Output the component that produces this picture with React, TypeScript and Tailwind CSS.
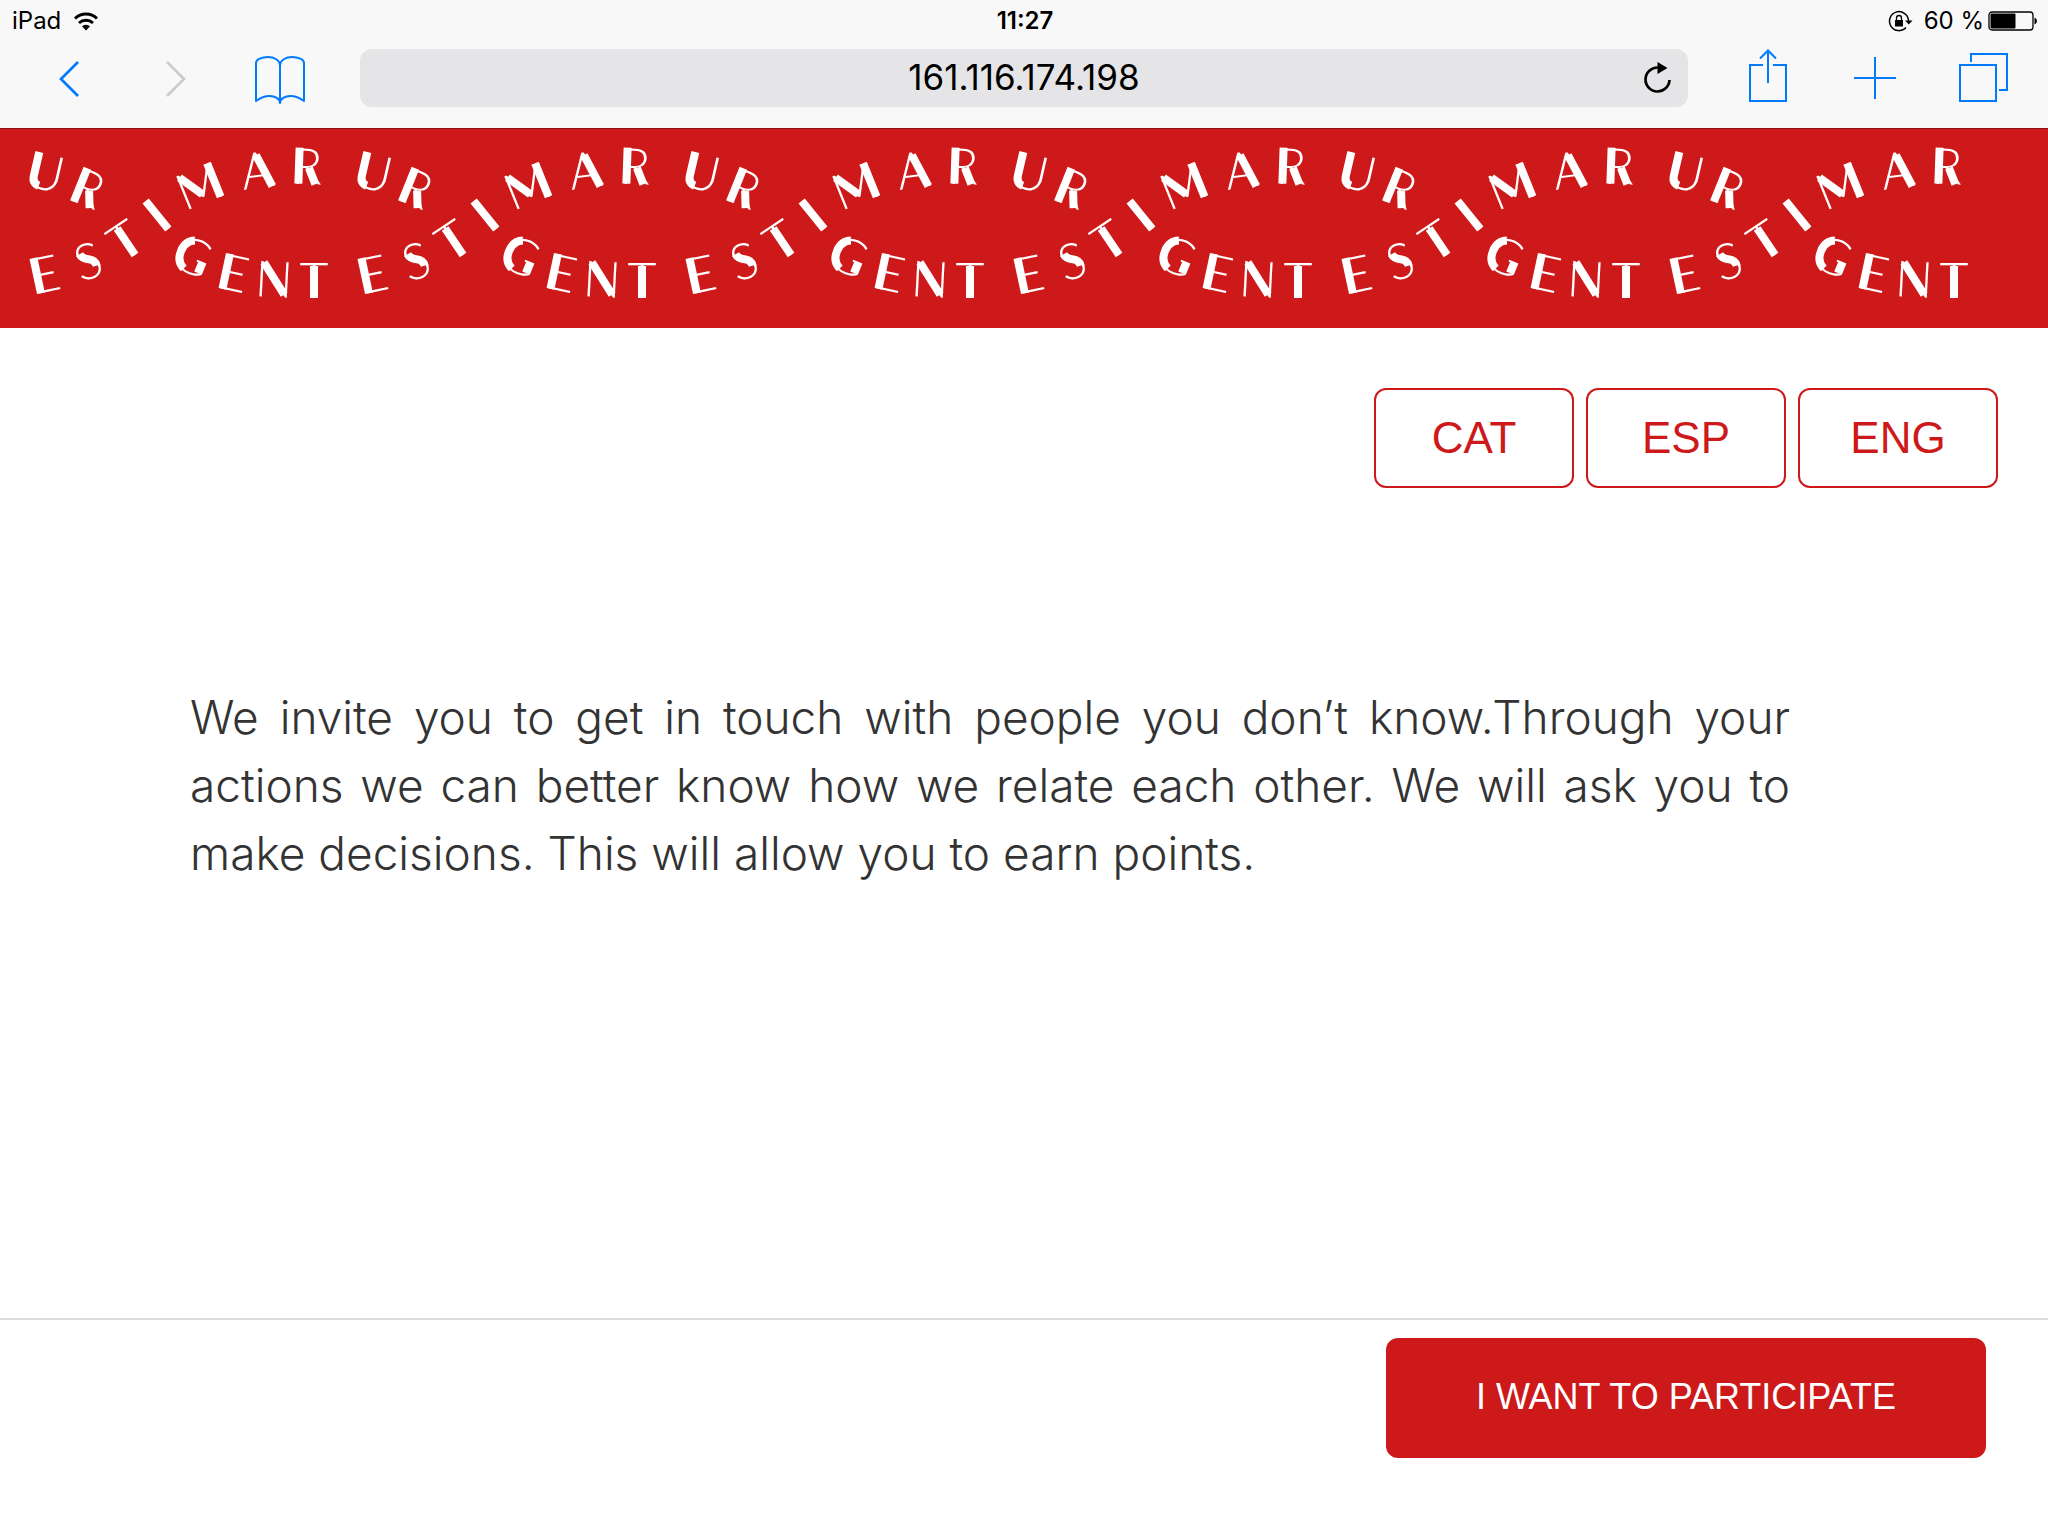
type Letter = { ch: string; x: number; y: number; r: number };

const LETTERS: Letter[] = [
  { ch: "U", x: 16, y: 24, r: 13 },
  { ch: "R", x: 58, y: 40, r: 22 },
  { ch: "E", x: 15, y: 126, r: -12 },
  { ch: "S", x: 58, y: 113, r: -17 },
  { ch: "T", x: 95, y: 92, r: -34 },
  { ch: "I", x: 127, y: 67, r: -39 },
  { ch: "M", x: 169, y: 38, r: -22 },
  { ch: "A", x: 227, y: 22, r: -8 },
  { ch: "R", x: 277, y: 18, r: 2 },
  { ch: "G", x: 163, y: 108, r: 22 },
  { ch: "E", x: 204, y: 125, r: 12 },
  { ch: "N", x: 244, y: 131, r: 3 },
  { ch: "T", x: 284, y: 132, r: 0 },
];

// Heavy strokes that give each letter its thick-and-thin contrast.
const ACCENTS: Record<string, string> = {
  U: "M-11 -18V6Q-11 14 -4 15",
  R: "M-8 -18V18M2 2L9 18",
  E: "M-8 -18V18",
  S: "M-6 -9Q-5 -4 1 -1.500Q7 1 7 7",
  T: "M0 -14V18",
  I: "M0 -18V18",
  M: "M-15 -15L0 9M16 -18V18",
  A: "M1 -15L13 18",
  G: "M-4 -15Q-13 -11 -13 0Q-13 11 -4 15M11 3V14",
  N: "M-11 -16L11 15",
};

function WaveTile() {
  return (
    <svg viewBox="0 0 328 150" className="h-[150px] w-[328px] shrink-0 overflow-visible" aria-label="Urgent Estimar">
      {LETTERS.map((l, i) => (
        <g key={i} transform={`translate(${l.x} ${l.y}) rotate(${l.r})`}>
          <text y="18" textAnchor="middle" className="fill-white font-['Lato'] text-[50px] font-light">
            {l.ch}
          </text>
          <path d={ACCENTS[l.ch]} fill="none" stroke="#fff" strokeWidth="8" />
        </g>
      ))}
    </svg>
  );
}

function StatusBar() {
  return (
    <div className="grid h-10 grid-cols-3 items-center pt-0.5 pr-[10px] pl-3 text-2xl text-black">
      <div className="flex items-center gap-3">
        <span>iPad</span>
        <svg viewBox="0 0 26 20" className="h-5 w-[26px]" aria-hidden="true">
          <g fill="none" stroke="#000" strokeWidth="3">
            <path d="M2 7.5a16 16 0 0 1 22 0" />
            <path d="M6 12a10.5 10.5 0 0 1 14 0" />
          </g>
          <path d="M13 19.5l-4-4.3a6 6 0 0 1 8 0z" />
        </svg>
      </div>
      <span className="text-center font-semibold">11:27</span>
      <div className="flex items-center justify-end gap-1">
        <svg viewBox="0 0 26 22" className="mr-1.5 h-[22px] w-[26px]" aria-hidden="true">
          <path d="M20.5 11V10.500A9.500 9.500 0 1 0 18 17.600" fill="none" stroke="#000" strokeWidth="1.500" />
          <path d="M17 10.500h7.500l-3.700 4z" />
          <rect x="7" y="10" width="8" height="6.500" />
          <path d="M8.500 10.500V8a2.500 2.500 0 0 1 5 0v2.500" fill="none" stroke="#000" strokeWidth="1.300" />
        </svg>
        <span>60 %</span>
        <svg viewBox="0 0 50 20" className="h-5 w-[50px]" aria-hidden="true">
          <rect x="1" y="1" width="44" height="18" rx="3" fill="none" stroke="#000" strokeWidth="1.300" />
          <rect x="2.500" y="2.500" width="25" height="15" rx="1" />
          <path d="M46.500 6.500q2.500 1 2.500 3.500t-2.500 3.500z" />
        </svg>
      </div>
    </div>
  );
}

function Toolbar() {
  return (
    <div className="flex items-center pt-[9px] pr-9 pb-[21px] pl-[58px] text-[#007aff]">
      <button aria-label="Back" className="mr-[82px]">
        <svg viewBox="0 0 24 58" className="h-[58px] w-6" fill="none" stroke="currentColor" strokeWidth="2.700">
          <path d="M20 13L3 30L20 47" />
        </svg>
      </button>
      <button aria-label="Forward" className="mr-16 text-[#cbcbcb]">
        <svg viewBox="0 0 24 58" className="h-[58px] w-6" fill="none" stroke="currentColor" strokeWidth="2.700">
          <path d="M3 13L20 30L3 47" />
        </svg>
      </button>
      <button aria-label="Bookmarks" className="mr-[52px]">
        <svg viewBox="0 0 56 58" className="h-[58px] w-14" fill="none" stroke="currentColor" strokeWidth="2" strokeLinejoin="round">
          <path d="M28 17C28 11 22 8 16 8C10 8 4 10.500 4 14V52C8 49 13 47 17.500 47C23 47 28 49.500 28 54C28 49.500 33 47 38.500 47C43 47 48 49 52 52V14C52 10.500 46 8 40 8C34 8 28 11 28 17V54" />
        </svg>
      </button>
      <div className="relative min-w-0 flex-1">
        <input
          aria-label="Address"
          defaultValue="161.116.174.198"
          className="block h-[58px] w-full rounded-xl bg-[#e5e5e7] px-16 pb-0.5 text-center text-[35px] text-black outline-none"
        />
        <button aria-label="Reload" className="absolute top-0 right-[14px] text-black">
          <svg viewBox="0 0 32 58" className="h-[58px] w-8">
            <path d="M27.500 31A12 12 0 1 1 16 18.500" fill="none" stroke="currentColor" strokeWidth="2.700" />
            <path d="M15.500 13L25.500 19L15.500 25z" fill="currentColor" />
          </svg>
        </button>
      </div>
      <button aria-label="Share" className="ml-[60px]">
        <svg viewBox="0 0 40 58" className="h-[58px] w-10" fill="none" stroke="currentColor" strokeWidth="2">
          <path d="M15 16H2V52H38V16H25M20 34V2M12 9.500L20 1.500L28 9.500" />
        </svg>
      </button>
      <button aria-label="New tab" className="ml-16">
        <svg viewBox="0 0 48 58" className="h-[58px] w-12" fill="none" stroke="currentColor" strokeWidth="2">
          <path d="M2 29H44M23 8V50" />
        </svg>
      </button>
      <button aria-label="Tabs" className="ml-14">
        <svg viewBox="0 0 56 58" className="h-[58px] w-14" fill="none" stroke="currentColor" strokeWidth="2">
          <path d="M4 16H40V52H4zM15 13V5H51V41H43" />
        </svg>
      </button>
    </div>
  );
}

export default function App() {
  return (
    <div className="flex min-h-screen flex-col bg-white font-['Liberation_Sans',sans-serif]">
      <header className="bg-[#f8f8f8] font-['Inter',sans-serif]">
        <StatusBar />
        <Toolbar />
      </header>
      <div className="flex overflow-hidden border-t border-[#8f1013] bg-[#cd1919] pt-[19px] pb-[30px] pl-[30px]">
        {[0, 1, 2, 3, 4, 5].map((i) => (
          <WaveTile key={i} />
        ))}
      </div>
      <main className="flex-1">
        <nav className="flex justify-end gap-3 pt-[60px] pr-[50px]">
          {["CAT", "ESP", "ENG"].map((lang) => (
            <button key={lang} className="h-[100px] w-[200px] rounded-xl border-2 border-[#cd1919] text-[44px] text-[#cd1919]">
              {lang}
            </button>
          ))}
        </nav>
        <p className="mt-[195px] mr-[258px] ml-[190px] text-justify font-['Inter',sans-serif] text-[46px] leading-[68px] font-light text-[#333]">
          We invite you to get in touch with people you don’t know.Through your actions we can better know how we relate each
          other. We will ask you to make decisions. This will allow you to earn points.
        </p>
      </main>
      <footer className="flex justify-end border-t-2 border-[#ddd] pt-[18px] pr-[62px] pb-[78px]">
        <button className="h-[120px] w-[600px] rounded-xl bg-[#cd1919] pb-0.5 text-4xl text-white">I WANT TO PARTICIPATE</button>
      </footer>
    </div>
  );
}
